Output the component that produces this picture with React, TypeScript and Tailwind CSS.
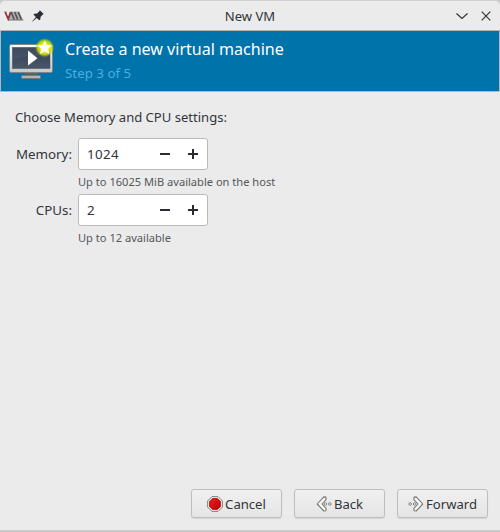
import type { ReactNode } from "react";

function VmLogo() {
  return (
    <svg width="20" height="10" viewBox="0 0 20 10" fill="none">
      <path d="M5.5.5h9.7l4 8.5H5z" fill="#b3afb0" />
      <path d="M.2 1H3" stroke="#999" strokeWidth="1" />
      <path d="M1.2 1 4.2 8 6.6 1.2" stroke="#8c3542" strokeWidth="1.8" />
      <path d="M7.2 1l3.1 7.8M10.7 1l3.1 7.8M14.2 1l3.2 7.8" stroke="#595355" strokeWidth="1.7" />
      <path d="M4.2 9h15.2" stroke="#777174" strokeWidth="1" />
    </svg>
  );
}

function Pin() {
  return (
    <svg width="12" height="12" viewBox="0 0 12 12" fill="#292e34">
      <path d="M7.8.2 11.7 4.1 10.5 4.7 8.5 6.9 8.4 9.3 7.2 10.3 4.7 7.9.6 11.6.2 11.2 3.9 7.1 1.4 4.6 2.5 3.7 5.1 3.5 7.2 1.5Z" />
    </svg>
  );
}

function Monitor() {
  return (
    <svg width="48" height="48" viewBox="0 0 48 48">
      <defs>
        <linearGradient id="frame" x2="0" y2="1">
          <stop stopColor="#fafafa" />
          <stop offset="1" stopColor="#c8c8c6" />
        </linearGradient>
        <linearGradient id="screen" x2="0" y2="1">
          <stop stopColor="#364254" />
          <stop offset="1" stopColor="#48566a" />
        </linearGradient>
        <radialGradient id="glow">
          <stop offset=".4" stopColor="#f0f000" />
          <stop offset=".72" stopColor="#d8df08" stopOpacity=".85" />
          <stop offset="1" stopColor="#9cbd35" stopOpacity="0" />
        </radialGradient>
      </defs>
      <path d="M17 35.5h12.5v3H17z" fill="#62615f" />
      <rect x="13.5" y="38.5" width="19" height="3" rx=".8" fill="#b3b5b3" stroke="#737572" strokeWidth=".8" />
      <rect x="1.5" y="7.5" width="43" height="28" rx="1.5" fill="url(#frame)" stroke="#82817e" strokeWidth=".9" />
      <rect x="4.5" y="10.5" width="37.5" height="21" fill="url(#screen)" stroke="#3e495a" strokeWidth=".5" />
      <path d="M4.5 10.5h37v4C31 21 18 18 4.5 23z" fill="#536074" opacity=".35" />
      <path d="M20 13.5v15l9.5-7.3z" fill="#fff" />
      <circle cx="36.7" cy="10.7" r="9.7" fill="url(#glow)" />
      <path d="m36.7 4.2 1.9 4.3 4.5.3-3.5 3 1.2 4.6-4.1-2.4-4.2 2.4 1.3-4.6-3.6-3 4.6-.3z" fill="#fff" stroke="#fff" strokeWidth=".8" />
    </svg>
  );
}

function StopIcon() {
  return (
    <svg width="16" height="16" viewBox="0 0 16 16">
      <defs>
        <linearGradient id="red" x2="1" y2="1">
          <stop stopColor="#ed2020" />
          <stop offset="1" stopColor="#b90000" />
        </linearGradient>
      </defs>
      <path d="M5 .6h6L15.4 5v6L11 15.4H5L.6 11V5z" fill="#eee" stroke="#80827f" strokeWidth="1" />
      <path d="M5.6 2.5h4.8l3.1 3.1v4.8l-3.1 3.1H5.6l-3.1-3.1V5.6z" fill="url(#red)" stroke="#c00808" strokeWidth=".8" />
    </svg>
  );
}

function Arrow({ flip = false }: { flip?: boolean }) {
  return (
    <svg width="16" height="16" viewBox="0 0 16 16" className={flip ? "-scale-x-100" : ""} fill="#f7f7f7" stroke="#777774">
      <path d="M7.8.9 1.2 8l6.6 7 2.1-.2.2-2.4L6 8l4.1-4.4-.2-2.5z" strokeWidth="1.1" strokeLinejoin="round" />
      <circle cx="9.4" cy="8" r="1.3" strokeWidth=".9" />
      <circle cx="13.8" cy="8" r="1.3" strokeWidth=".9" />
    </svg>
  );
}

function ActionButton({ icon, children }: { icon: ReactNode; children: ReactNode }) {
  return (
    <button className="flex h-[29px] w-[91px] items-center justify-center gap-[2px] rounded-[3px] border border-[#bebebe] bg-linear-to-b from-[#f0f0f0] to-[#e5e5e5] text-[13.1px] shadow-[0_1px_1px_#d4d4d4]">
      {icon}
      <span className="pt-[2px]">{children}</span>
    </button>
  );
}

function Field({ label, value, hint }: { label: string; value: string; hint: string }) {
  return (
    <div className="grid h-14 grid-cols-[57px_1fr] gap-x-[6px]">
      <label className="text-right text-[13.333px] leading-8 whitespace-nowrap">{label}</label>
      <div>
        <div className="flex h-8 w-[130px] items-center rounded-[3px] border border-[#bababa] bg-white pl-2 text-[#30343a]">
          <span className="w-[73px] pt-px text-[13.333px] tracking-[0.4px]">{value}</span>
          <svg width="38" height="10" viewBox="0 0 38 10" fill="#292d33">
            <path d="M0 4h10v2H0zM28 4h10v2H28zM32 0h2v10h-2z" />
          </svg>
        </div>
        <p className="mt-[4px] text-[11.1px] leading-4 whitespace-nowrap text-[#555759]">{hint}</p>
      </div>
    </div>
  );
}

export default function App() {
  return (
    <div className="h-[532px] w-[500px] bg-[#c9c9c9] pb-[2px] font-['Noto_Sans',sans-serif] text-[13.05px] text-[#31363b]">
      <div className="flex h-[530px] flex-col overflow-hidden rounded-t-[5px] border-t border-[#d0d0d0] bg-[#ebebeb]">
        <header className="grid h-[29px] shrink-0 grid-cols-[1fr_auto_1fr] items-center px-[9px]">
          <div className="-ml-[5px] flex items-center gap-[8px]">
            <VmLogo />
            <Pin />
          </div>
          <h1 className="leading-5">New VM</h1>
          <div className="flex items-center justify-end gap-[13px]">
            <svg width="12" height="10" viewBox="0 0 12 10" fill="none" stroke="#30353a" strokeWidth="1.2">
              <path d="m.5 2.5 5.5 5 5.5-5" />
            </svg>
            <svg width="10" height="10" viewBox="0 0 10 10" fill="none" stroke="#30353a" strokeWidth="1.2">
              <path d="m.7.7 8.6 8.6m0-8.6L.7 9.3" />
            </svg>
          </div>
        </header>
        <section className="flex h-[62px] shrink-0 border border-[#b5b5b5] bg-[#0073aa] pl-[7px] pt-[6px]">
          <Monitor />
          <div className="ml-[9px]">
            <h2 className="text-[16.06px] leading-6 text-white">Create a new virtual machine</h2>
            <p className="text-[13.333px] leading-6 text-[#4cade0]">Step 3 of 5</p>
          </div>
        </section>
        <main className="flex-1 px-[15px] pt-[15px]">
          <p className="h-[31px] leading-5">Choose Memory and CPU settings:</p>
          <Field label="Memory:" value="1024" hint="Up to 16025 MiB available on the host" />
          <Field label="CPUs:" value="2" hint="Up to 12 available" />
        </main>
        <footer className="flex justify-end gap-3 pr-3 pb-3">
          <ActionButton icon={<StopIcon />}>Cancel</ActionButton>
          <ActionButton icon={<Arrow />}>Back</ActionButton>
          <ActionButton icon={<Arrow flip />}>Forward</ActionButton>
        </footer>
      </div>
    </div>
  );
}
